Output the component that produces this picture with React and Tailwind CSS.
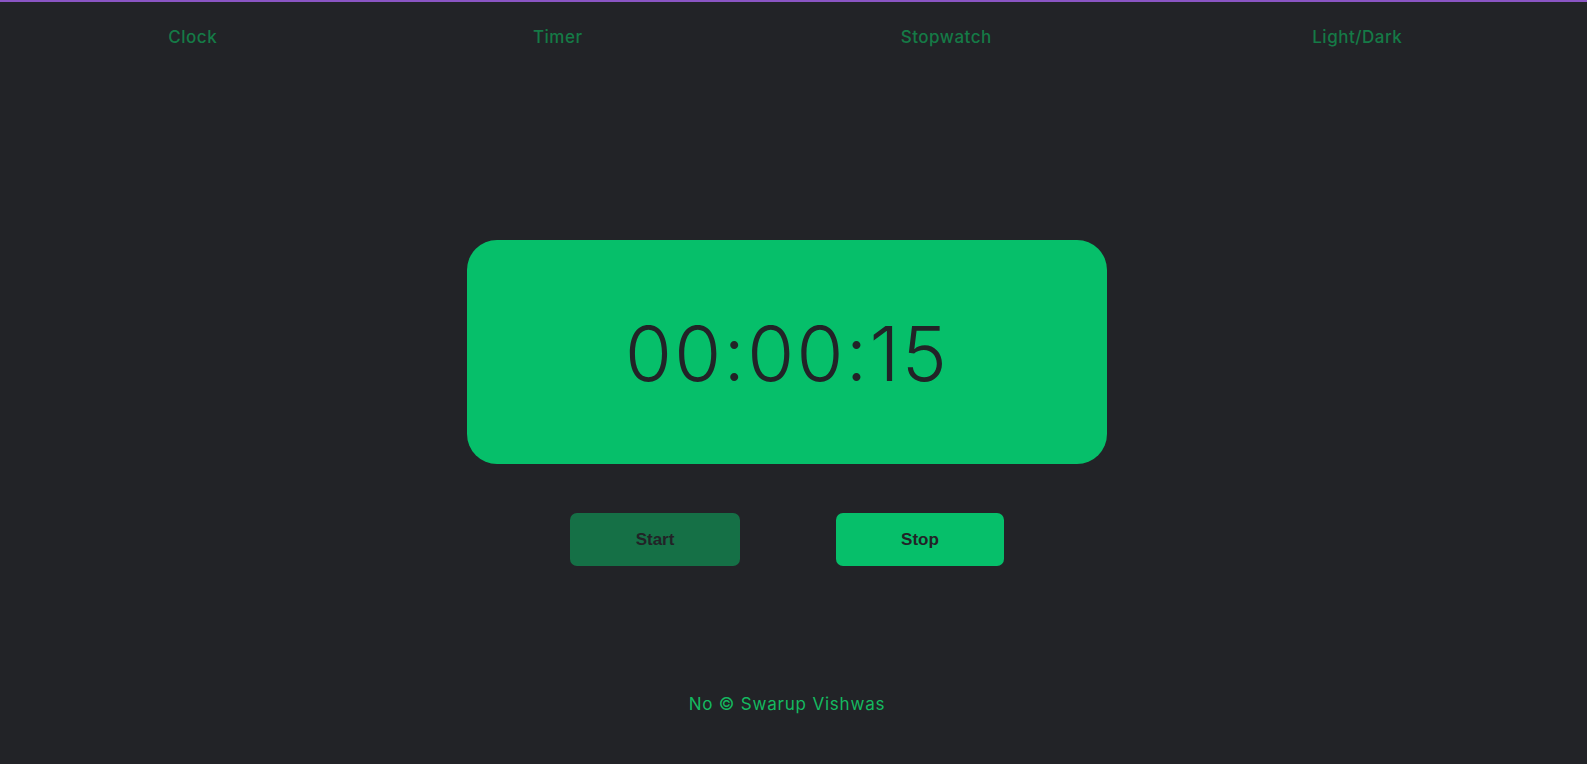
export default function App() {
  return (
    <div className="min-h-[764px] w-full bg-[#222327] border-t-2 border-[#8a55c4] font-['Inter',sans-serif]">
      <nav className="h-[72px] flex items-center justify-around pl-[11px] pr-[24px] text-[17px] font-medium tracking-[0.5px] text-[#157a46]">
        <a className="w-[50px] text-center whitespace-nowrap">Clock</a>
        <a className="w-[53px] text-center whitespace-nowrap">Timer</a>
        <a className="w-[97px] text-center whitespace-nowrap">Stopwatch</a>
        <a className="w-[98px] text-center whitespace-nowrap">Light/Dark</a>
      </nav>
      <main className="flex flex-col items-center pr-[13px]">
        <div className="mt-[166px] w-[640px] h-[224px] rounded-[30px] bg-[#06bf6a] flex items-center justify-center">
          <span className="text-[76px] font-light leading-none text-[#222327] tracking-[2.3px] pt-[1px]">00:00:15</span>
        </div>
        <div className="mt-[49px] flex gap-[96px] font-['Liberation_Sans',Arial,sans-serif] font-bold text-[17px] text-[#222327]">
          <button className="w-[170px] h-[53px] rounded-[7px] bg-[#157046]">Start</button>
          <button className="w-[168px] h-[53px] rounded-[7px] bg-[#06bf6a]">Stop</button>
        </div>
        <footer className="mt-[126px] text-[17px] leading-[24px] tracking-[0.8px] text-[#14b960]">No © Swarup Vishwas</footer>
      </main>
    </div>
  );
}
